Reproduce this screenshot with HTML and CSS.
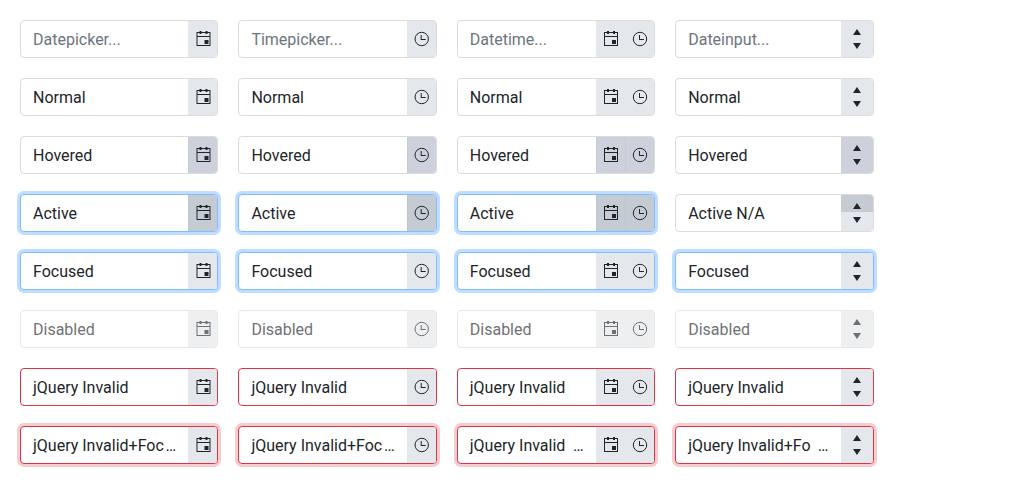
FILE: index.html
```html
<!DOCTYPE html>
<html lang="en">
<head>
<meta charset="utf-8">
<title>Date and time inputs</title>
<link rel="stylesheet" href="styles.css">
</head>
<body>
<svg class="symbols" aria-hidden="true">
  <symbol id="calendar" viewBox="0 0 16 16">
    <path d="M1 1h14v14H1zM2 2v3h12V2zM2 6v8h12V6z" fill-rule="evenodd"/>
    <path d="M4 0h2v3H4zM10 0h2v3h-2zM9 9h4v4H9z"/>
  </symbol>
  <symbol id="clock" viewBox="0 0 16 16">
    <circle cx="8" cy="8" r="6.7" fill="none" stroke="currentColor"/>
    <path d="M7 4h1v4h4v1H7z"/>
  </symbol>
  <symbol id="up" viewBox="0 0 8 6"><path d="M4 0l4 6H0z"/></symbol>
  <symbol id="down" viewBox="0 0 8 6"><path d="M0 0h8L4 6z"/></symbol>
</svg>
<main class="grid" id="grid"></main>
<script src="pickers.js"></script>
</body>
</html>
```
FILE: styles.css
```css
body {
  margin: 0;
  background: #fff;
  color: #212529;
  font: 16px/24px Roboto, sans-serif;
}
.symbols { position: absolute; width: 0; height: 0; }
.grid {
  display: grid;
  grid-template-columns: repeat(4, 198.4px);
  grid-auto-rows: 38px;
  gap: 20px;
  padding: 20px;
}
.picker {
  display: flex;
  box-sizing: border-box;
  border: 1px solid #dcdcdd;
  border-radius: 4px;
  background: #fff;
}
.value {
  display: flex;
  flex: 1;
  justify-content: space-between;
  min-width: 0;
  padding: 7px 12px 5px;
  white-space: pre;
}
.button {
  display: flex;
  box-sizing: border-box;
  width: 29.2px;
  align-items: center;
  justify-content: center;
  background: #e4e7eb;
  border-left: 1px solid #e4e7eb;
}
.button:last-child, .spinner { border-radius: 0 3px 3px 0; }
.icon { width: 16px; height: 16px; fill: currentColor; flex: none; overflow: visible; }
.spinner {
  display: flex;
  flex-direction: column;
  width: 32px;
  overflow: hidden;
  background: #e4e7eb;
}
.step { display: flex; flex: 1; justify-content: center; }
.step.increase { align-items: flex-end; padding-bottom: 3px; }
.step.decrease { align-items: flex-start; padding-top: 5px; }
.arrow { width: 8px; height: 6px; fill: currentColor; }
.placeholder .value { color: #6c757d; }
.hovered .button, .hovered .spinner { background: #cdd1db; border-color: #c3cbd3; }
.active .button { background: #c5cbd3; border-color: #bdc5cd; }
.pressed .increase { background: #c5cbd3; }
.active, .focused { border-color: #80bdff; box-shadow: 0 0 0 3px #bfdeff; }
.disabled { opacity: .65; }
.invalid { border-color: #dc3545; }
.invalid-focused { box-shadow: 0 0 0 3px #f6ccd0; }
```
FILE: pickers.js
```js
const rows = [
  ["placeholder", ["Datepicker...", "Timepicker...", "Datetime...", "Dateinput..."]],
  ["normal", "Normal"],
  ["hovered", "Hovered"],
  ["active", ["Active", "Active", "Active", "Active N/A"]],
  ["focused", "Focused"],
  ["disabled", "Disabled"],
  ["invalid", "jQuery Invalid"],
  ["invalid invalid-focused", ["jQuery Invalid+Foc", "jQuery Invalid+Foc", "jQuery Invalid", "jQuery Invalid+Fo"]]
];
const button = (name, shift = 0) => `<span class="button"><svg class="icon" viewBox="0 0 16 16"><use href="#${name}" x="${shift}" width="16" height="16"/></svg></span>`;
const step = (kind, name) => `<span class="step ${kind}"><svg class="arrow"><use href="#${name}"/></svg></span>`;
const controls = [
  button("calendar", 0.5),
  button("clock", -0.3),
  button("calendar") + button("clock"),
  `<span class="spinner">${step("increase", "up")}${step("decrease", "down")}</span>`
];
document.getElementById("grid").innerHTML = rows.map(([state, text]) =>
  controls.map((control, i) => {
    const name = state === "active" && i === 3 ? "pressed" : state;
    const value = Array.isArray(text) ? text[i] : text;
    const more = state.includes("invalid-focused") ? "<span>…</span>" : "";
    return `<div class="picker ${name}"><div class="value"><span>${value}</span>${more}</div>${control}</div>`;
  }).join("")
).join("");
```
